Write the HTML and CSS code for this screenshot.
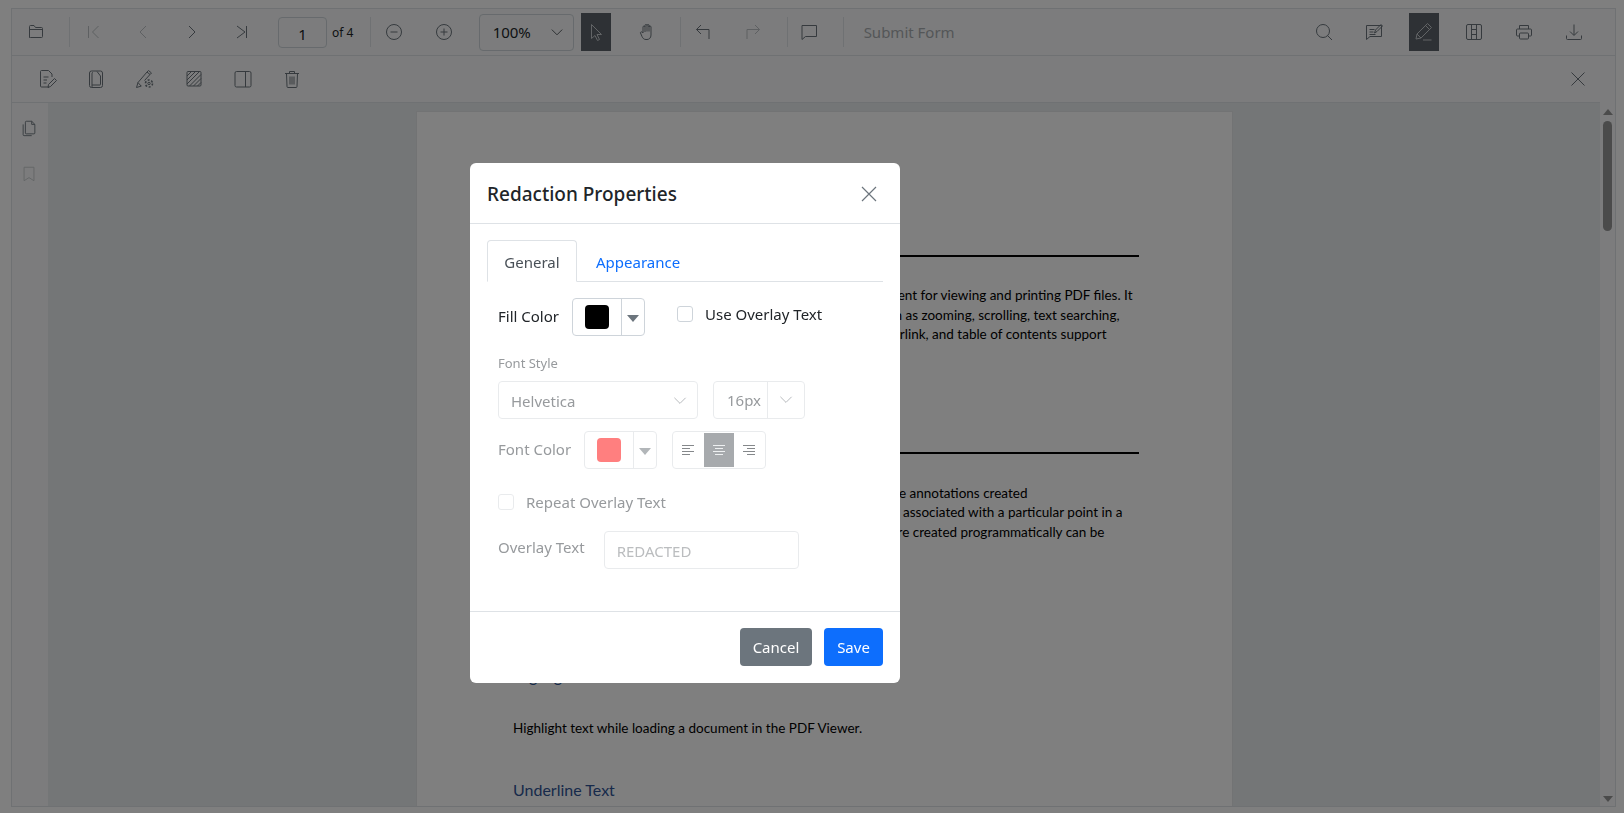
FILE: index.html
```html
<!DOCTYPE html>
<html lang="en">
<head>
  <meta charset="UTF-8" />
  <title>PDF Viewer - Redaction Properties</title>
  <link rel="stylesheet" href="styles.css">
</head>
<body>
  <div class="viewer">
    <div class="toolbar">
      <div class="tool tool-folder"><svg viewBox="0 0 20 20"><path d="M3.500 15.500v-11a1 1 0 0 1 1-1h3.500l1.500 2h6a1 1 0 0 1 1 1v8a1 1 0 0 1-1 1h-11a1 1 0 0 1-1-1zM3.500 7.500h13.500"/></svg></div>
      <div class="sep sep-folder"></div>
      <div class="nav-group">
        <div class="tool w40 off"><svg viewBox="0 0 20 20"><path d="M5.500 4v12M15.500 4l-6 6 6 6"/></svg></div>
        <div class="tool w40 off"><svg viewBox="0 0 20 20"><path d="M13 4l-6 6 6 6"/></svg></div>
        <div class="tool w40"><svg viewBox="0 0 20 20"><path d="M7 4l6 6-6 6"/></svg></div>
        <div class="tool w40"><svg viewBox="0 0 20 20"><path d="M5 4l8 6-8 6M14.500 4v12"/></svg></div>
      </div>
      <input class="page-input" value="1" />
      <span class="page-count">of 4</span>
      <div class="sep sep-page"></div>
      <div class="nav-group">
        <div class="tool w40"><svg viewBox="0 0 20 20"><circle cx="10" cy="10" r="7.500"/><path d="M6.500 10h7"/></svg></div>
        <div class="tool w40"><svg viewBox="0 0 20 20"><circle cx="10" cy="10" r="7.500"/><path d="M6.500 10h7M10 6.500v7"/></svg></div>
      </div>
      <div class="zoom-select"><span>100%</span><svg viewBox="0 0 20 20"><path d="M3.500 7l6.500 6.500L16.500 7"/></svg></div>
      <div class="tool w30 active tool-pointer"><svg viewBox="0 0 20 20"><path d="M5.500 2.500v14l3.500-3 2.500 5 2-1-2.500-5h4.500z"/></svg></div>
      <div class="tool w40 tool-hand"><svg viewBox="0 0 20 20"><path d="M6 11V5a1 1 0 0 1 2 0V3.500a1 1 0 0 1 2 0 1 1 0 0 1 2 0V5a1 1 0 0 1 2 0v8c0 3-2 4.500-4 4.500h-1c-2 0-3-1-4-3L3.500 11c-.5-1 1.500-2 2.500 0zM8 5v5M10 3.500v6M12 3.500v6"/></svg></div>
      <div class="sep sep-hand"></div>
      <div class="tool w40 tool-undo"><svg viewBox="0 0 20 20"><path d="M8 3L3.500 7.500 8 12M3.500 7.500h12.500v9.500"/></svg></div>
      <div class="tool w40 off tool-redo"><svg viewBox="0 0 20 20"><path d="M12 3l4.500 4.500L12 12M16.500 7.500H4v9.500"/></svg></div>
      <div class="sep sep-redo"></div>
      <div class="tool w40 tool-comment"><svg viewBox="0 0 20 20"><path d="M3 3.500h14.500v11H6.500L3 17.500z"/></svg></div>
      <div class="sep sep-comment"></div>
      <span class="submit-form">Submit Form</span>
      <div class="right-tools">
        <div class="tool w30"><svg viewBox="0 0 20 20"><circle cx="9" cy="9" r="6.500"/><path d="M13.500 13.500l4.500 4.500"/></svg></div>
        <div class="tool w30"><svg viewBox="0 0 20 20"><path d="M2.500 3.500h15v11H6L2.500 17.500zM5.500 7.500h5M5.500 10h4M5.500 12.500h6M10.500 11l1-3 5.500-5.500 1.500 1.500-5.500 5.500z"/></svg></div>
        <div class="tool w30 active"><svg viewBox="0 0 20 20"><path d="M2 17l1-5L13.500 1.500l4 4L7 16zM3 12l4 4M11.500 3.500l4 4M9 18h8.500"/></svg></div>
        <div class="tool w30"><svg viewBox="0 0 20 20"><rect x="2.500" y="2.500" width="15" height="15" rx="1.500"/><path d="M7.500 2.500v15M12.500 2.500v15M7.500 7.500h5M7.500 12.500h5"/></svg></div>
        <div class="tool w30"><svg viewBox="0 0 20 20"><path d="M5.500 7V3.500h9V7M5.500 14H3.500a1 1 0 0 1-1-1V8a1 1 0 0 1 1-1h13a1 1 0 0 1 1 1v5a1 1 0 0 1-1 1h-2"/><rect x="5.500" y="11" width="9" height="6" rx="1"/></svg></div>
        <div class="tool w30"><svg viewBox="0 0 20 20"><path d="M10 2.500V13M6 9.500l4 4 4-4M2.500 13.500v3a1 1 0 0 0 1 1h13a1 1 0 0 0 1-1v-3"/></svg></div>
      </div>
    </div>

    <div class="toolbar toolbar-redact">
      <div class="tool w30"><svg viewBox="0 0 20 20"><path d="M12 18H4.500a1 1 0 0 1-1-1V2.500a1 1 0 0 1 1-1h7l3.500 3.500v3M6.500 8h5M6.500 11h3.500M6.500 14h3M11 18.500l.5-3 6-6 2 2-6 6z"/></svg></div>
      <div class="tool w30"><svg viewBox="0 0 20 20"><rect x="3.500" y="2" width="13" height="16.500" rx="2"/><path d="M6 18.500V4.500a1 1 0 0 1 1-1M6 16h8a.5.5 0 0 0 .5-.5V7l-3.500-4.500"/></svg></div>
      <div class="tool w30"><svg viewBox="0 0 20 20"><path d="M1.500 18.500l1.500-5L12 3l3 2.500-5.500 6M1.500 18.500l5-1.500M3 13.500l3 3.500M12 3l1.500-1.500 3 2.500-1.500 1.500"/><circle cx="14" cy="14.500" r="1.200"/><circle class="gear" cx="14" cy="14.500" r="3.500"/></svg></div>
      <div class="tool w30"><svg viewBox="0 0 20 20"><rect x="3" y="2.500" width="14" height="14.500" rx="1"/><path d="M3 7l4.500-4.500M3 11l8.500-8.500M3 15l12.500-12.500M5.500 17L17 5.500M9.500 17L17 9.500M13.500 17l3.500-3.500"/></svg></div>
      <div class="tool w30"><svg viewBox="0 0 20 20"><rect x="2" y="2.500" width="16" height="15.500" rx="1.500"/><path d="M12.500 2.500V18"/></svg></div>
      <div class="tool w30"><svg viewBox="0 0 20 20"><path d="M3 4.500h14M7.500 4.500V2.500h5v2M4.500 4.500l.5 13a1 1 0 0 0 1 1h8a1 1 0 0 0 1-1l.5-13M8 7.500v8M10 7.500v8M12 7.500v8"/></svg></div>
      <div class="tool w30 tool-close"><svg viewBox="0 0 20 20"><path d="M3.500 3.500l13 13M16.500 3.500l-13 13"/></svg></div>
    </div>

    <div class="workspace">
      <div class="sidebar">
        <div class="side-icon"><svg viewBox="0 0 20 20"><path d="M7 2.500h6l3.500 3.500v9.500a1 1 0 0 1-1 1H7a1 1 0 0 1-1-1v-12a1 1 0 0 1 1-1zM13 2.500V6h3.500M3.500 6v11.500a1 1 0 0 0 1 1H13"/></svg></div>
        <div class="side-icon off"><svg viewBox="0 0 20 20"><path d="M4.500 2.500h11v15L10 14l-5.500 3.500z"/></svg></div>
      </div>
      <div class="doc-area">
        <div class="pdf-page">
          <div class="rule"></div>
          <div class="para">
            <p class="line end-6">component for viewing and printing PDF files. It</p>
            <p class="line end-19">such as zooming, scrolling, text searching,</p>
            <p class="line end-32">hyperlink, and table of contents support</p>
          </div>
          <div class="rule rule-second"></div>
          <div class="para para-second">
            <p class="line end-111">the annotations created</p>
            <p class="line end-16">associated with a particular point in a</p>
            <p class="line end-34">are created programmatically can be</p>
          </div>
          <h3 class="pdf-heading heading-highlight">Highlight Text</h3>
          <p class="pdf-text">Highlight text while loading a document in the PDF Viewer.</p>
          <h3 class="pdf-heading heading-underline">Underline Text</h3>
        </div>
      </div>
      <div class="scrollbar">
        <span class="arrow-up"></span>
        <span class="thumb"></span>
        <span class="arrow-down"></span>
      </div>
    </div>
  </div>

  <div class="backdrop">
    <div class="modal">
      <div class="modal-header">
        <h2>Redaction Properties</h2>
        <svg class="modal-close" viewBox="0 0 20 20"><path d="M3 3l14 14M17 3L3 17"/></svg>
      </div>
      <div class="modal-body">
        <div class="tabs">
          <button class="tab tab-on">General</button>
          <button class="tab">Appearance</button>
        </div>

        <div class="row row-fill">
          <label class="field-label">Fill Color</label>
          <div class="color-btn">
            <span class="swatch swatch-black"></span>
            <span class="color-drop"><i class="caret"></i></span>
          </div>
          <span class="checkbox check-overlay"></span>
          <span class="check-text">Use Overlay Text</span>
        </div>

        <div class="disabled">
          <div class="small-label">Font Style</div>
          <div class="row row-font">
            <div class="font-select"><span>Helvetica</span><svg viewBox="0 0 20 20"><path d="M3 6l7 7 7-7"/></svg></div>
            <div class="size-select"><span>16px</span><b><svg viewBox="0 0 20 20"><path d="M3 6l7 7 7-7"/></svg></b></div>
          </div>
          <div class="row row-color">
            <label class="field-label">Font Color</label>
            <div class="color-btn color-btn-off">
              <span class="swatch swatch-pink"></span>
              <span class="color-drop"><i class="caret"></i></span>
            </div>
            <div class="align-group">
              <span class="align-btn align-left"><svg viewBox="0 0 12 12"><path d="M0 1.500h12M0 4.500h8M0 7.500h12M0 10.500h8"/></svg></span>
              <span class="align-btn align-on"><svg viewBox="0 0 12 12"><path d="M0 1.500h12M2 4.500h8M0 7.500h12M2 10.500h8"/></svg></span>
              <span class="align-btn"><svg viewBox="0 0 12 12"><path d="M0 1.500h12M4 4.500h8M0 7.500h12M4 10.500h8"/></svg></span>
            </div>
          </div>
          <div class="row row-repeat">
            <span class="checkbox"></span>
            <span class="check-text">Repeat Overlay Text</span>
          </div>
          <div class="row row-overlay">
            <label class="field-label label-overlay">Overlay Text</label>
            <input class="overlay-input" placeholder="REDACTED" />
          </div>
        </div>
      </div>
      <div class="modal-footer">
        <button class="btn btn-cancel">Cancel</button>
        <button class="btn btn-save">Save</button>
      </div>
    </div>
  </div>
</body>
</html>
```

FILE: styles.css
```css
* { box-sizing: border-box; }
html, body { height: 100%; }
body { margin: 0; padding: 8px 8px 6px 11px; background-color: #fff; color: #212529; font-family: "Noto Sans", sans-serif; font-size: 14px; overflow: hidden; }
svg { fill: none; stroke: currentColor; stroke-width: 1; }

.viewer { height: 799px; border: 1px solid #dee2e6; display: flex; flex-direction: column; }
.toolbar { height: 47px; flex: none; display: flex; align-items: center; background-color: #f8f9fa; border-bottom: 1px solid #dee2e6; }
.toolbar-redact { height: 46px; gap: 19px; padding-left: 20px; border-bottom: none; }

.tool { height: 38px; display: flex; align-items: center; justify-content: center; color: #6c757d; flex: none; }
.tool svg { width: 20px; height: 20px; }
.tool.off { color: #bcc0c4; }
.tool.active { background-color: #5c636a; color: #c4c8cc; }
.w40 { width: 40px; }
.w30 { width: 30px; }
.tool-folder { width: 47px; }
.tool-pointer { margin-left: 7px; }
.tool-hand { margin-left: 16px; }
.tool-undo { margin-left: 2px; }
.tool-redo { margin-left: 10px; }
.tool-comment { margin-left: 1px; }
.tool-close { margin-left: auto; margin-right: 22px; }
.gear { stroke-dasharray: 2 1.670; stroke-width: 1.600; }

.sep { width: 1px; height: 30px; background-color: #dee2e6; flex: none; }
.sep-folder { margin-left: 10px; }
.sep-page { margin-left: 17px; }
.sep-hand { margin-left: 13px; }
.sep-redo { margin-left: 14px; }
.sep-comment { margin-left: 14px; }

.nav-group { display: flex; gap: 9.670px; margin-left: 3px; }
.page-input { width: 49px; height: 31px; margin-left: 16px; border: 1px solid #ced4da; border-radius: 4px; background: #f8f9fa; text-align: center; font: 15px "Noto Sans", sans-serif; color: #212529; padding: 3px 0 0; }
.page-count { margin-left: 5px; font-size: 12px; color: #212529; width: 21px; white-space: nowrap; }
.zoom-select { width: 95px; height: 37px; margin-left: 15px; padding: 0 8px 0 13px; border: 1px solid #ced4da; border-radius: 4px; display: flex; align-items: center; justify-content: space-between; font-size: 15px; }
.zoom-select svg { width: 16px; height: 16px; color: #343a40; }
.submit-form { margin-left: 20px; font-size: 15px; color: #a9adb1; }
.right-tools { margin-left: auto; margin-right: 26px; display: flex; gap: 20px; }

.workspace { flex: 1; min-height: 0; display: flex; }
.sidebar { width: 36px; flex: none; background-color: #f8f9fa; display: flex; flex-direction: column; align-items: center; padding: 16px 2px 0 0; gap: 28px; border-top: 1px solid #dee2e6; }
.side-icon { width: 18px; height: 18px; color: #6c757d; }
.side-icon.off { color: #c5c9cc; }
.side-icon svg { width: 18px; height: 18px; display: block; }
.doc-area { flex: 1; min-width: 0; background-color: #e9ecef; overflow: hidden; display: flex; justify-content: center; padding-top: 8px; border-top: 1px solid #dee2e6; }
.pdf-page { width: 817px; height: 1056px; flex: none; background-color: #fff; padding: 143px 93px 0 96.500px; font-family: Lato, sans-serif; color: #000; border: 1px solid #e4e6e8; }
.rule { height: 2px; background-color: #000; }
.rule-second { margin-top: 107px; }
.para { margin-top: 29px; }
.para-second { margin-top: 30px; }
.line { margin: 0; height: 19.5px; line-height: 19.5px; font-size: 13.500px; text-align: right; white-space: nowrap; }
.end-6 { padding-right: 6px; }
.end-19 { padding-right: 19px; }
.end-32 { padding-right: 32px; }
.end-111 { padding-right: 111px; }
.end-16 { padding-right: 16px; }
.end-34 { padding-right: 34px; }
.pdf-heading { margin: 0; font-weight: 400; font-size: 16px; line-height: 24px; color: #2f5496; }
.heading-highlight { margin-top: 122px; }
.heading-underline { margin-top: 40px; }
.pdf-text { margin: 30px 0 0; line-height: 20px; font-size: 13.500px; }

.scrollbar { width: 15px; flex: none; background-color: #f8f9fa; display: flex; flex-direction: column; align-items: center; padding: 7px 0 4px; }
.thumb { width: 9px; height: 110px; margin-top: 6px; border-radius: 5px; background-color: #979797; }
.arrow-up, .arrow-down { width: 0; height: 0; border-left: 5px solid transparent; border-right: 5px solid transparent; }
.arrow-up { border-bottom: 6px solid #979797; }
.arrow-down { margin-top: auto; border-top: 6px solid #979797; }

.backdrop { position: fixed; top: 0; left: 0; right: 0; bottom: 0; background-color: rgba(0, 0, 0, 0.5); padding: 163px 0 0 470px; }
.modal { width: 430px; height: 520px; background-color: #fff; border-radius: 6px; display: flex; flex-direction: column; }
.modal-header { height: 61px; flex: none; padding: 1px 21px 0 17px; display: flex; align-items: center; justify-content: space-between; border-bottom: 1px solid #dee2e6; }
.modal-header h2 { margin: 0; font-size: 19px; font-weight: 500; color: #212529; }
.modal-close { width: 20px; height: 20px; color: #6c757d; stroke-width: 1.200; }
.modal-body { flex: 1; padding: 16px 17px 0; }

.tabs { display: flex; height: 42px; border-bottom: 1px solid #dee2e6; }
.tab { height: 42px; border: 1px solid transparent; background: none; font: 15px "Noto Sans", sans-serif; color: #0d6efd; padding: 2px 18px 0; border-radius: 4px 4px 0 0; }
.tab-on { width: 90px; padding: 2px 0 0; border-color: #dee2e6; border-bottom-color: #fff; background-color: #fff; color: #495057; }

.row { display: flex; align-items: center; }
.row-fill { margin: 16px 0 0 11px; height: 38px; }
.field-label { font-size: 15px; margin-top: -2px; }
.color-btn { width: 73px; height: 38px; margin-left: 13px; border: 1px solid #ced4da; border-radius: 4px; display: flex; align-items: center; background-color: #fff; }
.swatch { width: 24px; height: 24px; margin-left: 12px; border-radius: 4px; flex: none; }
.swatch-black { background-color: #000; }
.swatch-pink { background-color: #ff7f7f; }
.color-drop { margin-left: 12px; height: 100%; flex: 1; border-left: 1px solid #ced4da; display: flex; align-items: center; justify-content: center; }
.caret { width: 0; height: 0; border-left: 6px solid transparent; border-right: 6px solid transparent; border-top: 7px solid #6c757d; margin-top: 2px; }
.checkbox { width: 16px; height: 16px; border: 1px solid #ced4da; border-radius: 3px; background-color: #fff; flex: none; }
.check-overlay { margin-left: 32px; margin-top: -6px; }
.check-text { margin-left: 12px; font-size: 15px; margin-top: -6px; }

.disabled { margin-left: 11px; color: #979a9d; }
.disabled .color-btn, .disabled .font-select, .disabled .size-select, .disabled .align-group, .disabled .checkbox, .disabled .overlay-input { border-color: #e9ebed; }
.small-label { margin-top: 18px; font-size: 13px; line-height: 18px; }
.row-font { margin-top: 9px; gap: 15px; }
.font-select { width: 200px; height: 38px; padding: 1px 9px 0 12px; border: 1px solid #e9ebed; border-radius: 4px; display: flex; align-items: center; justify-content: space-between; font-size: 15px; }
.font-select svg, .size-select svg { width: 16px; height: 16px; color: #a4a8ac; display: block; }
.size-select { width: 92px; height: 38px; padding-left: 13px; border: 1px solid #e9ebed; border-radius: 4px; display: flex; align-items: center; justify-content: space-between; font-size: 15px; }
.size-select b { width: 37px; height: 100%; border-left: 1px solid #e9ebed; display: flex; align-items: center; justify-content: center; font-weight: 400; }
.row-color { margin-top: 12px; }
.row-color .field-label { width: 74px; white-space: nowrap; }
.row-color .color-btn { margin-left: 12px; }
.color-btn-off .color-drop { border-left-color: #e9ebed; }
.color-btn-off .caret { border-top-color: #b2b6b9; }
.align-group { width: 94px; height: 38px; margin-left: 15px; border: 1px solid #e9ebed; border-radius: 4px; display: flex; align-items: center; padding: 0 1px; }
.align-btn { flex: 1; height: 34px; display: flex; align-items: center; justify-content: center; color: #85888b; }
.align-btn svg { width: 12px; height: 12px; }
.align-left svg { margin-right: 3px; }
.align-on { background-color: #a7aaad; color: #eef0f1; }
.row-repeat { margin-top: 25px; height: 16px; }
.row-repeat .check-text { margin-top: 0; }
.row-overlay { margin-top: 21px; height: 38px; }
.label-overlay { margin-top: -7px; }
.overlay-input { width: 195px; height: 38px; margin-left: 19px; padding: 2px 12px 0; border: 1px solid #e9ebed; border-radius: 4px; background-color: #fff; font: 15px "Noto Sans", sans-serif; }
.overlay-input::placeholder { color: #bbbdbf; opacity: 1; }

.modal-footer { height: 72px; flex: none; border-top: 1px solid #dee2e6; padding: 16px 17px 0 0; display: flex; justify-content: flex-end; gap: 12px; }
.btn { height: 38px; border: none; border-radius: 4px; color: #fff; font: 15px "Noto Sans", sans-serif; }
.btn-cancel { width: 72px; background-color: #6c757d; }
.btn-save { width: 59px; background-color: #0d6efd; }
```
